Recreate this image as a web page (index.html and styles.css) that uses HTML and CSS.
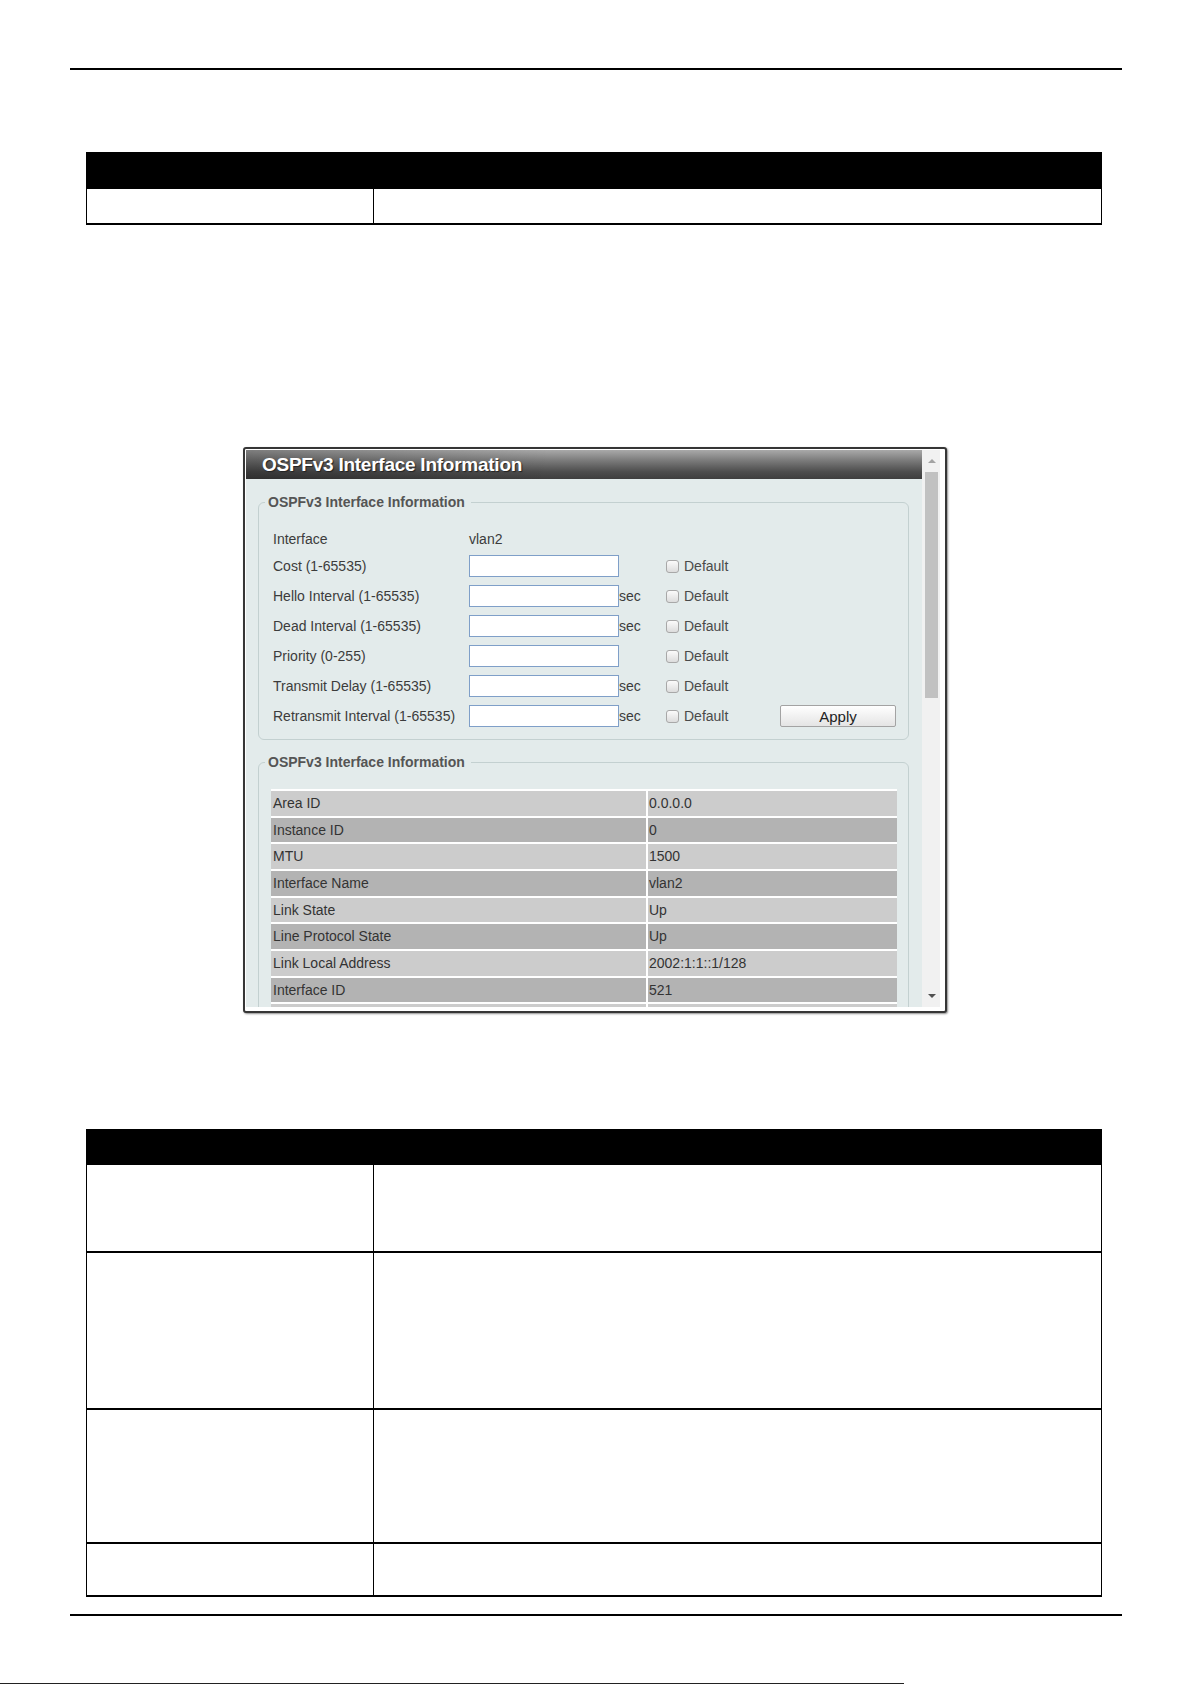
FILE: index.html
```html
<!DOCTYPE html>
<html lang="en">
<head>
  <meta charset="UTF-8" />
  <meta name="viewport" content="width=device-width, initial-scale=1.0"/>
  <title>OSPFv3 Interface Information</title>
  <link rel="stylesheet" href="styles.css">
</head>
<body>

  <div class="rule rule-top"></div>

  <div class="spec">
    <div class="spec-head"></div>
    <div class="spec-row h34"><div class="key"></div><div class="desc"></div></div>
  </div>

  <div class="window">
    <div class="pane">
      <div class="titlebar">OSPFv3 Interface Information</div>

      <fieldset class="group group-form">
        <legend>OSPFv3 Interface Information</legend>
        <div class="form-grid">
          <span>Interface</span>
          <span class="wide">vlan2</span>

          <span>Cost (1-65535)</span>
          <input type="text" class="field">
          <span></span>
          <label class="def"><input type="checkbox"> Default</label>
          <span></span>

          <span>Hello Interval (1-65535)</span>
          <input type="text" class="field">
          <span>sec</span>
          <label class="def"><input type="checkbox"> Default</label>
          <span></span>

          <span>Dead Interval (1-65535)</span>
          <input type="text" class="field">
          <span>sec</span>
          <label class="def"><input type="checkbox"> Default</label>
          <span></span>

          <span>Priority (0-255)</span>
          <input type="text" class="field">
          <span></span>
          <label class="def"><input type="checkbox"> Default</label>
          <span></span>

          <span>Transmit Delay (1-65535)</span>
          <input type="text" class="field">
          <span>sec</span>
          <label class="def"><input type="checkbox"> Default</label>
          <span></span>

          <span>Retransmit Interval (1-65535)</span>
          <input type="text" class="field">
          <span>sec</span>
          <label class="def"><input type="checkbox"> Default</label>
          <button class="apply">Apply</button>
        </div>
      </fieldset>

      <fieldset class="group group-info">
        <legend>OSPFv3 Interface Information</legend>
        <table class="info">
          <tr><td>Area ID</td><td>0.0.0.0</td></tr>
          <tr><td>Instance ID</td><td>0</td></tr>
          <tr><td>MTU</td><td>1500</td></tr>
          <tr><td>Interface Name</td><td>vlan2</td></tr>
          <tr><td>Link State</td><td>Up</td></tr>
          <tr><td>Line Protocol State</td><td>Up</td></tr>
          <tr><td>Link Local Address</td><td>2002:1:1::1/128</td></tr>
          <tr><td>Interface ID</td><td>521</td></tr>
          <tr><td>&nbsp;</td><td>&nbsp;</td></tr>
        </table>
      </fieldset>
    </div>

    <div class="scrollbar">
      <div class="arrow up"></div>
      <div class="thumb"></div>
      <div class="track"></div>
      <div class="arrow down"></div>
    </div>
  </div>

  <div class="spec spec-tall">
    <div class="spec-head h36"></div>
    <div class="spec-row h86"><div class="key"></div><div class="desc"></div></div>
    <div class="spec-row h155"><div class="key"></div><div class="desc"></div></div>
    <div class="spec-row h132"><div class="key"></div><div class="desc"></div></div>
    <div class="spec-row h51"><div class="key"></div><div class="desc"></div></div>
  </div>

  <div class="rule rule-bottom"></div>
  <div class="footer-line"></div>

</body>
</html>
```

FILE: styles.css
```css
* {
  box-sizing: border-box;
}

body {
  margin: 0;
  font-family: "Liberation Sans", Arial, sans-serif;
  background: #fff;
  color: #000;
}

/* page rules */
.rule {
  margin-left: 70px;
  width: 1052px;
  height: 2px;
  background: #000;
}

.rule-top {
  margin-top: 68px;
}

.rule-bottom {
  margin-top: 17px;
}

.footer-line {
  margin-top: 67px;
  width: 904px;
  height: 1px;
  background: #222;
}

/* parameter tables */
.spec {
  margin: 82px 0 0 86px;
  width: 1016px;
  border-left: 1px solid #000;
  border-right: 1px solid #000;
}

.spec-tall {
  margin-top: 116px;
}

.spec-head {
  height: 37px;
  background: #000;
}

.spec-head.h36 {
  height: 36px;
}

.spec-row {
  display: flex;
  border-bottom: 2px solid #000;
}

.spec-row .key {
  width: 287px;
  border-right: 1px solid #000;
}

.spec-row .desc {
  flex: 1;
}

.h34 { height: 36px; }
.h86 { height: 88px; }
.h155 { height: 157px; }
.h132 { height: 134px; }
.h51 { height: 53px; }

/* web UI window */
.window {
  display: flex;
  margin: 222px 0 0 243px;
  width: 704px;
  height: 566px;
  padding: 1px 5px 4px 1px;
  background: #fff;
  border: 2px solid #363636;
  border-radius: 3px;
  box-shadow: 1px 1px 2px rgba(0, 0, 0, 0.45);
}

.pane {
  width: 676px;
  height: 557px;
  overflow: hidden;
  background: #e3ebeb;
}

.titlebar {
  height: 29px;
  padding-left: 16px;
  line-height: 29px;
  font-size: 19px;
  font-weight: bold;
  letter-spacing: -0.25px;
  color: #fff;
  text-shadow: 1px 1px 1px #222;
  background:
    linear-gradient(to right, rgba(0, 0, 0, 0.25), rgba(0, 0, 0, 0) 45%),
    linear-gradient(to bottom, #a9a9a9 0%, #767676 40%, #4d4d4d 75%, #3e3e3e 100%);
}

.group {
  margin: 15px 13px 0 12px;
  padding: 16px 12px 8px 14px;
  border: 1px solid #c3d0d0;
  border-radius: 6px;
  min-width: 0;
}

.group legend {
  margin-left: -8px;
  padding: 0 6px 0 3px;
  line-height: 17px;
  font-size: 14px;
  font-weight: bold;
  color: #555;
}

.group-info {
  margin-top: 14px;
  padding: 18px 11px 0 12px;
}

.group-info legend {
  margin-left: -6px;
}

.form-grid {
  display: grid;
  grid-template-columns: 196px 150px 47px 114px 116px;
  grid-template-rows: 24px repeat(6, 30px);
  align-items: center;
  font-size: 14px;
  color: #3c3c3c;
}

.form-grid .wide {
  grid-column: 2 / span 4;
}

.field {
  width: 150px;
  height: 22px;
  margin: 0;
  padding: 0 3px;
  border: 1px solid #7f9fc8;
  background: #fff;
  font: 14px "Liberation Sans", Arial, sans-serif;
}

.def {
  display: flex;
  align-items: center;
  gap: 5px;
  color: #4a4a4a;
}

.def input {
  appearance: none;
  -webkit-appearance: none;
  width: 13px;
  height: 13px;
  margin: 0;
  border: 1px solid #a8a8a8;
  border-radius: 3px;
  background: linear-gradient(#fbfbfb, #dcdcdc);
}

.apply {
  width: 116px;
  height: 22px;
  padding: 0;
  border: 1px solid #a3a3a3;
  border-radius: 2px;
  background: linear-gradient(#ffffff, #e4e4e4);
  font: 15px "Liberation Sans", Arial, sans-serif;
  color: #222;
}

.info {
  width: 626px;
  border-collapse: separate;
  border-spacing: 0;
  font-size: 14px;
  color: #333;
}

.info td {
  padding: 0 0 0 2px;
  line-height: 24.67px;
  border-top: 2px solid #fff;
  background: #cccccc;
}

.info td + td {
  width: 251px;
  padding-left: 1px;
  border-left: 2px solid #fff;
}

.info tr:nth-child(even) td {
  background: #b3b3b3;
}

/* scrollbar */
.scrollbar {
  display: flex;
  flex-direction: column;
  width: 18px;
  background: #f1f1f1;
}

.arrow {
  display: flex;
  justify-content: center;
  align-items: center;
  height: 22px;
  padding-left: 1px;
}

.arrow.down {
  height: 23px;
}

.arrow::after {
  content: "";
  border-left: 4px solid transparent;
  border-right: 4px solid transparent;
}

.arrow.up::after {
  border-bottom: 4px solid #a3a3a3;
}

.arrow.down::after {
  border-top: 4px solid #505050;
}

.thumb {
  height: 226px;
  margin: 0 2px 0 3px;
  background: #c1c1c1;
}

.track {
  flex: 1;
}
```
